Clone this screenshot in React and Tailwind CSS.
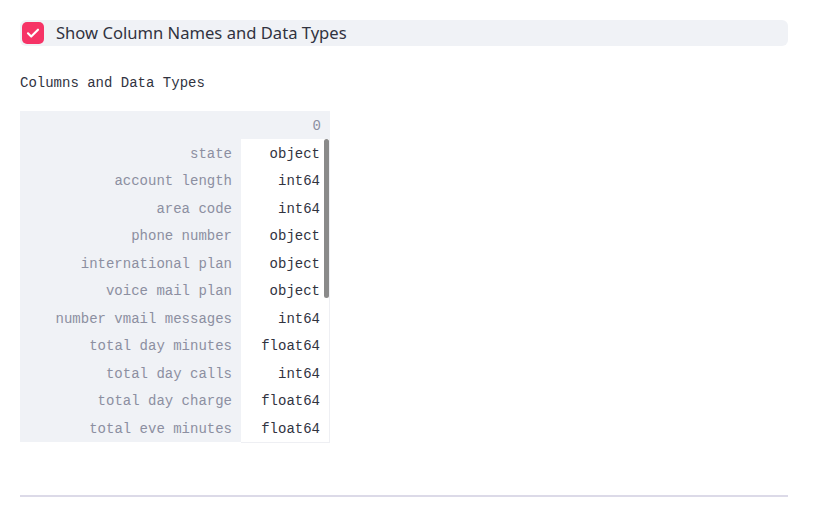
import React from 'react';

const rows = [
  ['state', 'object'],
  ['account length', 'int64'],
  ['area code', 'int64'],
  ['phone number', 'object'],
  ['international plan', 'object'],
  ['voice mail plan', 'object'],
  ['number vmail messages', 'int64'],
  ['total day minutes', 'float64'],
  ['total day calls', 'int64'],
  ['total day charge', 'float64'],
  ['total eve minutes', 'float64'],
];

const mono = { fontFamily: '"Liberation Mono", "DejaVu Sans Mono", monospace' };

const App = () => {
  return (
    <div className="w-[833px] h-[514px] bg-white overflow-hidden px-5 pt-5">
      <div className="w-[768px] flex flex-col">
        {/* Checkbox */}
        <label className="flex items-center gap-3 h-[26px] bg-[#f0f2f6] rounded-md pl-[2px]">
          <span className="w-[22px] h-[22px] rounded-[5px] bg-[#f63366] flex items-center justify-center">
            <svg width="16" height="16" viewBox="0 0 24 24" fill="none" stroke="white" strokeWidth="3.2" strokeLinecap="round" strokeLinejoin="round">
              <path d="M4.5 12.5l4.8 4.8L19.5 7" />
            </svg>
          </span>
          <span className="text-[16.6px] text-[#31333f]" style={{ fontFamily: '"Noto Sans", "Open Sans", sans-serif' }}>
            Show Column Names and Data Types
          </span>
        </label>

        {/* Title */}
        <div className="mt-[27px] text-[14px] leading-5 text-[#31333f]" style={mono}>
          Columns and Data Types
        </div>

        {/* Table */}
        <div className="relative mt-[18px] w-[310px] text-[14px]" style={mono}>
          <div className="flex h-[28px] bg-[#f0f2f6]">
            <div className="w-[221px]" />
            <div className="flex-1 flex items-center justify-end pt-[2px] pr-[9px] text-[#8c8fa1]">0</div>
          </div>
          {rows.map(([name, type]) => (
            <div key={name} className="flex h-[27.5px]">
              <div className="w-[221px] bg-[#f0f2f6] flex items-center justify-end pt-[3px] pr-[9px] text-[#8c8fa1]">
                {name}
              </div>
              <div className="flex-1 flex items-center justify-end pt-[3px] pr-[9px] text-[#31333f] bg-white border-r border-[#eeeff3]">
                {type}
              </div>
            </div>
          ))}
          <div className="ml-[221px] h-px bg-[#eeeff3]" />
          <div className="absolute left-[304px] top-[28px] w-[5px] h-[159px] rounded-full bg-[#8a8a8a]" />
        </div>

        {/* Divider */}
        <div className="mt-[52px] h-[2px] bg-[#dcdae8]" />
      </div>
    </div>
  );
};

export default App;
